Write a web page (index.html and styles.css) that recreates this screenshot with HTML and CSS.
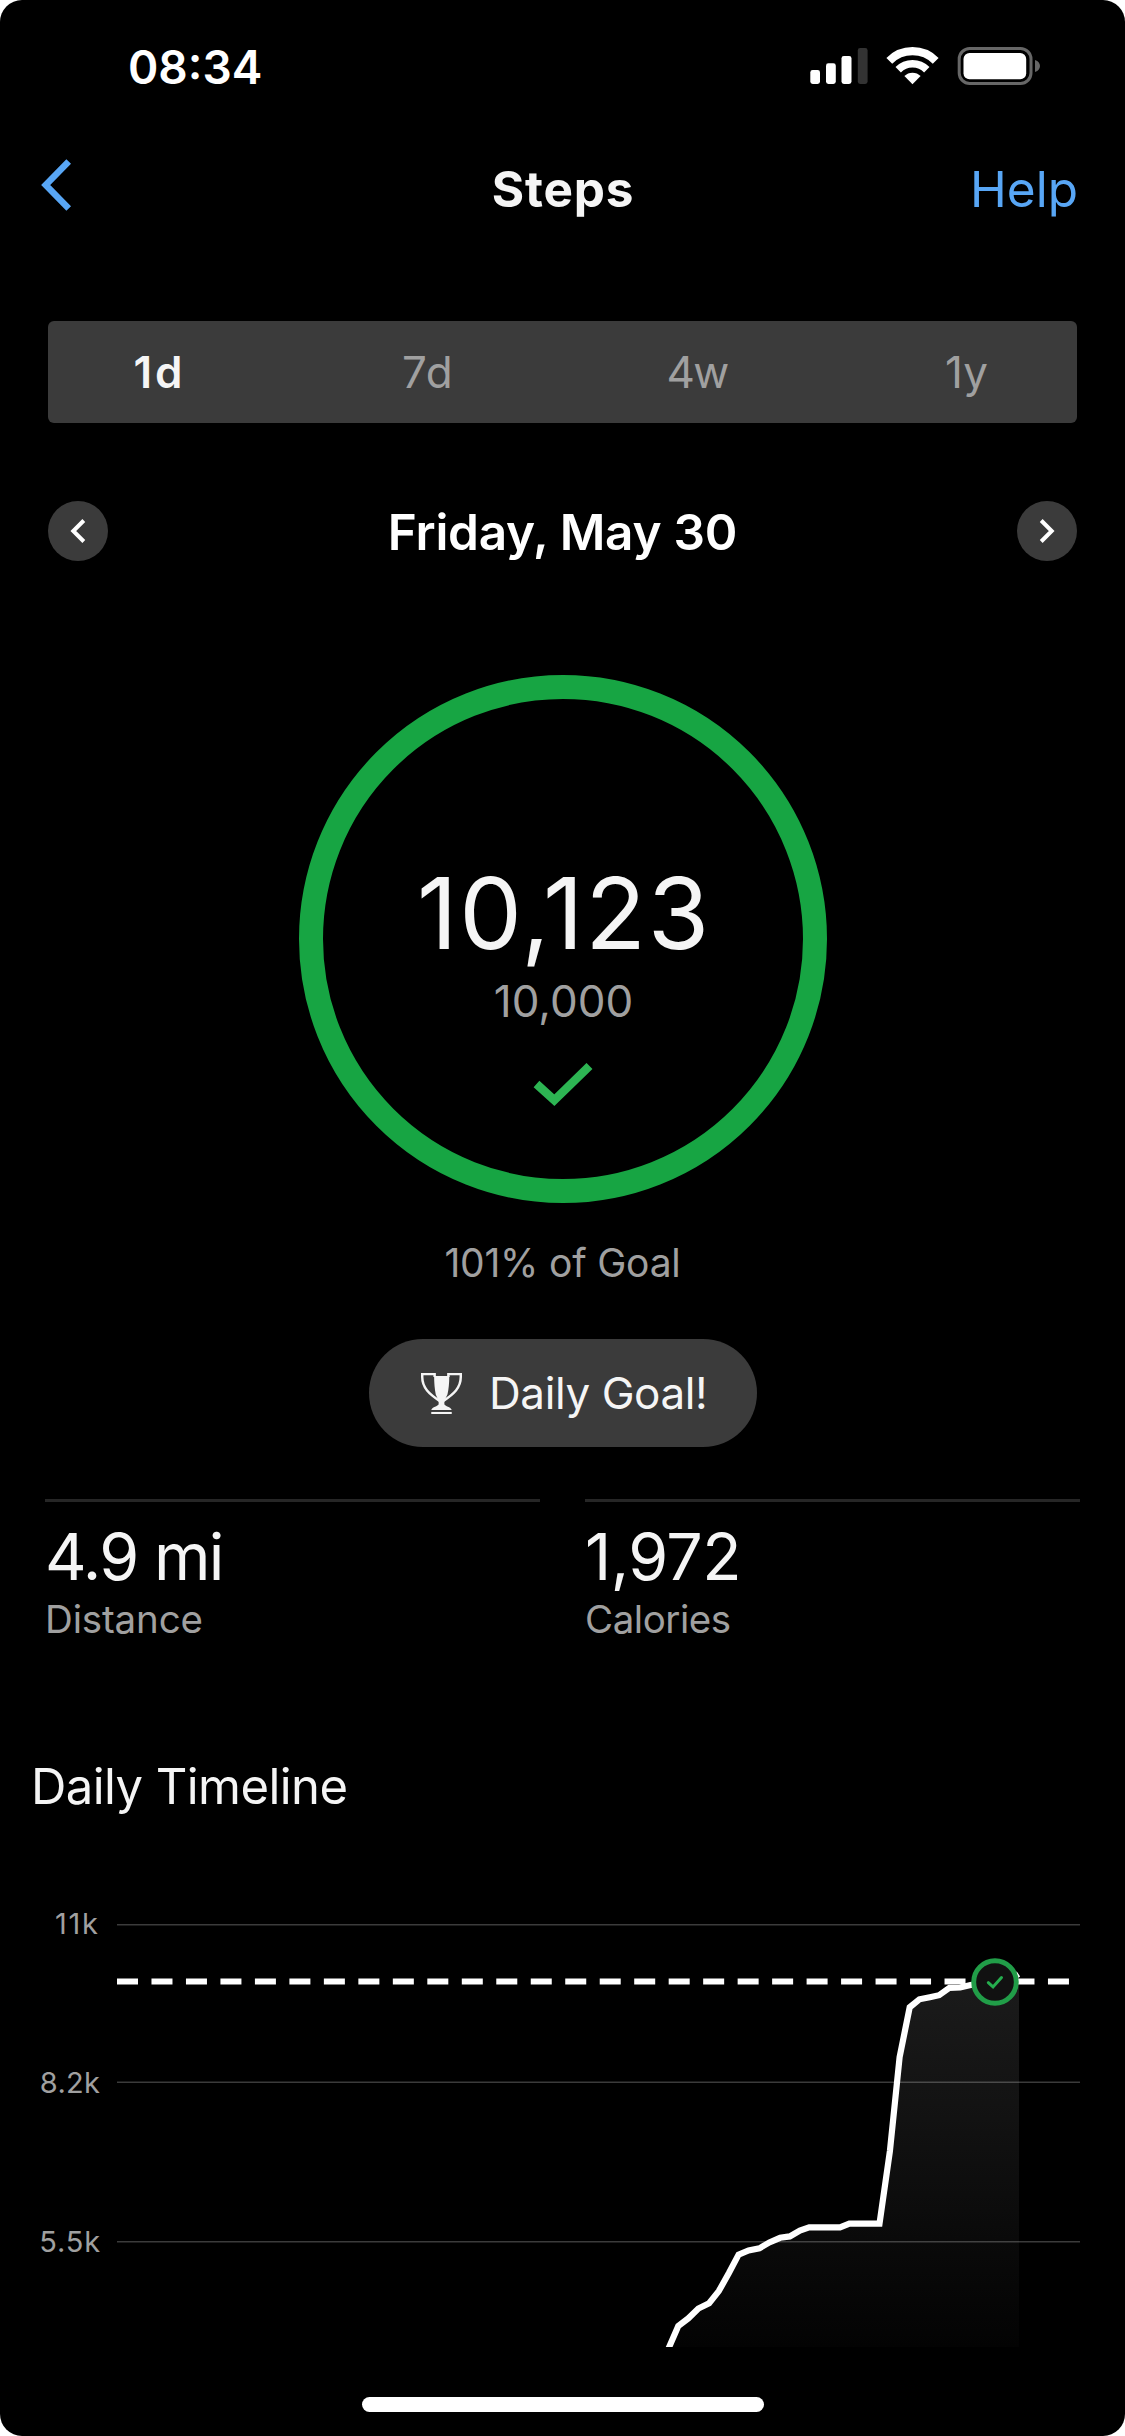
FILE: index.html
```html
<!DOCTYPE html>
<html lang="en">
<head>
<meta charset="utf-8">
<title>Steps</title>
<link rel="stylesheet" href="styles.css">
</head>
<body>
<div class="screen">
  <div class="status">
    <span class="clock">08:34</span>
    <svg class="status-icons" width="230" height="38" viewBox="0 0 230 38">
      <g fill="#fff">
        <rect x="0.3" y="23" width="9.7" height="14" rx="2.4"/>
        <rect x="16" y="16.3" width="9.8" height="20.7" rx="2.4"/>
        <rect x="31.5" y="9" width="10" height="28" rx="2.4"/>
        <rect x="47.8" y="1" width="9.8" height="36" rx="2.4" fill="#333"/>
        <path d="M102.5 37.3L94.4 29A11.5 11.5 0 0 1 110.6 29Z"/>
      </g>
      <g fill="none" stroke="#fff">
        <path stroke-width="8.2" d="M79.3 13.8A32.8 32.8 0 0 1 125.7 13.8"/>
        <path stroke-width="7.6" d="M88.2 22.7A20.2 20.2 0 0 1 116.8 22.7"/>
      </g>
      <rect x="149.2" y="1.5" width="71.8" height="35" rx="10.5" fill="none" stroke="#676767" stroke-width="3"/>
      <rect x="153.5" y="6" width="62.7" height="26.3" rx="6" fill="#fff"/>
      <path d="M225 13C228.5 14 230 16.5 230 19S228.5 24 225 25Z" fill="#676767"/>
    </svg>
  </div>

  <header class="nav">
    <svg class="back" width="32" height="54" viewBox="0 0 32 54"><path d="M28.7 3.500L5.700 27L28.700 50.500" fill="none" stroke="#58a6f5" stroke-width="6.500"/></svg>
    <h1 class="title">Steps</h1>
    <a class="help">Help</a>
  </header>

  <div class="segments">
    <span class="segment segment-active">1d</span>
    <span class="segment segment-7d">7d</span>
    <span class="segment segment-4w">4w</span>
    <span class="segment">1y</span>
  </div>

  <div class="day">
    <span class="day-button"><svg width="60" height="60" viewBox="0 0 60 60"><path d="M35.8 19.5L25.3 30L35.8 40.5" fill="none" stroke="#fff" stroke-width="4"/></svg></span>
    <span class="day-label">Friday, May 30</span>
    <span class="day-button"><svg width="60" height="60" viewBox="0 0 60 60"><path d="M24.2 19.5L34.7 30L24.2 40.5" fill="none" stroke="#fff" stroke-width="4"/></svg></span>
  </div>

  <section class="ring">
    <span class="ring-value">10,123</span>
    <span class="ring-goal">10,000</span>
    <svg class="ring-check" width="60" height="44" viewBox="0 0 60 44"><path d="M3.5 21L21.3 37.2L56.5 3" fill="none" stroke="#2db553" stroke-width="8.5"/></svg>
  </section>
  <p class="percent">101% of Goal</p>

  <div class="badge">
    <svg width="41" height="41" viewBox="0 0 40 40">
      <path d="M12.8 3H27.6C27.6 10 27 16 25.8 21L22.8 27V30.5C23.5 32.5 29 33 30 36.2H10C11 33 16.5 32.5 17.2 30.5V27L14.4 21C13.4 16 12.8 10 12.8 3Z" fill="#f5f5f5"/>
      <path d="M10 38H30V40H10Z" fill="#f5f5f5"/>
      <path d="M13.3 4V1H1.2V4C1.2 14.5 8 20.5 18.5 27.5M26.7 4V1H38.8V4C38.8 14.5 32 20.5 21.5 27.5" fill="none" stroke="#f5f5f5" stroke-width="2.4"/>
    </svg>
    <span>Daily Goal!</span>
  </div>

  <div class="stats">
    <div class="stat">
      <div class="stat-value stat-distance">4.9 mi</div>
      <div class="stat-label">Distance</div>
    </div>
    <div class="stat">
      <div class="stat-value stat-calories">1,972</div>
      <div class="stat-label stat-label-calories">Calories</div>
    </div>
  </div>

  <h2 class="section-title">Daily Timeline</h2>
  <svg class="chart" width="1125" height="447" viewBox="0 1900 1125 447">
    <defs>
      <linearGradient id="area" gradientUnits="userSpaceOnUse" x1="0" y1="1980" x2="0" y2="2347">
        <stop offset="0" stop-color="#1b1b1b"/>
        <stop offset="1" stop-color="#030303"/>
      </linearGradient>
    </defs>
    <path fill="url(#area)" d="M667 2350L678.3 2325.9L688.4 2318.3L698.4 2308.5L709.1 2303.3L718.8 2291.1L728.9 2273L738.6 2254.6L748.6 2250.4L759.4 2248.3L769.4 2242.4L780.1 2237.8L789.8 2236.4L799.9 2230.5L809.2 2227.4H840L849.4 2223.6H879.5L889.9 2151.1L899.6 2057.1L909.7 2007.3L919.4 1999.3L939.1 1995.2L949.5 1987.8L960.2 1987.5L970.6 1985L1019 1976V2350Z"/>
    <path d="M117 1924.7H1080M117 2082.2H1080M117 2241.7H1080" stroke="#fff" stroke-opacity="0.23" stroke-width="1.5"/>
    <path d="M117 1981.5H1070" stroke="#fff" stroke-width="6.2" stroke-dasharray="21 13.48"/>
    <path fill="none" stroke="#fff" stroke-width="6.2" d="M667 2352L678.3 2325.9L688.4 2318.3L698.4 2308.5L709.1 2303.3L718.8 2291.1L728.9 2273L738.6 2254.6L748.6 2250.4L759.4 2248.3L769.4 2242.4L780.1 2237.8L789.8 2236.4L799.9 2230.5L809.2 2227.4H840L849.4 2223.6H879.5L889.9 2151.1L899.6 2057.1L909.7 2007.3L919.4 1999.3L929.8 1997.2L939.1 1995.2L949.5 1987.8L960.2 1987.5L970.6 1985L1000 1981L1010 1979.5L1018.5 1974"/>
    <circle cx="995" cy="1982" r="21.3" fill="#111" stroke="#219d48" stroke-width="4.9"/>
    <path d="M988.3 1982.7L993 1986.9L1001.5 1977.5" fill="none" stroke="#25ad4e" stroke-width="3" stroke-linecap="round"/>
    <g class="axis">
      <text x="55" y="1934" letter-spacing="1.7">11k</text>
      <text x="39.8" y="2093" letter-spacing="0.3">8.2k</text>
      <text x="39.2" y="2252" letter-spacing="0.9">5.5k</text>
    </g>
  </svg>
  <div class="home-bar"></div>
</div>
</body>
</html>
```
FILE: styles.css
```css
* { box-sizing: border-box; margin: 0; padding: 0; }

body {
  background: #fff;
  font-family: Inter, "Liberation Sans", sans-serif;
}

svg { display: block; flex: none; }

.screen {
  width: 1125px;
  height: 2436px;
  display: flex;
  flex-direction: column;
  background: #000;
  color: #f5f5f5;
  border-radius: 22px;
  overflow: hidden;
}

.status {
  height: 132px;
  flex: none;
  display: flex;
  align-items: center;
  justify-content: space-between;
  padding: 0 85px 0 128px;
}

.clock {
  color: #fff;
  font-size: 46px;
  font-weight: 580;
  line-height: 56px;
  padding-top: 1px;
}

.nav {
  height: 106px;
  flex: none;
  display: grid;
  grid-template-columns: 1fr auto 1fr;
  align-items: center;
  padding: 0 47px 0 40px;
  margin-top: 4px;
}

.back { margin-bottom: 8px; }

.title {
  font-size: 49.5px;
  font-weight: 650;
  line-height: 60px;
  letter-spacing: 0.8px;
  padding-left: 8px;
}

.help {
  color: #58a6f5;
  font-size: 49.5px;
  line-height: 60px;
  text-align: right;
}

.segments {
  height: 102px;
  flex: none;
  display: grid;
  grid-template-columns: repeat(4, 221px);
  justify-content: space-between;
  align-items: center;
  margin: 79px 48px 0;
  border-radius: 6px;
  background: #3b3b3b;
}

.segment {
  color: #a0a0a0;
  font-size: 44px;
  line-height: 54px;
  text-align: center;
}

.segment-active {
  color: #f5f5f5;
  font-weight: 600;
  letter-spacing: 3px;
  padding-left: 2px;
}

.segment-7d { letter-spacing: 1px; }
.segment-4w { letter-spacing: -1.5px; }

.day {
  flex: none;
  display: flex;
  align-items: center;
  justify-content: space-between;
  margin: 78px 48px 0;
}

.day-button {
  border-radius: 50%;
  background: #3b3b3b;
}

.day-label {
  color: #fff;
  font-size: 49.5px;
  font-weight: 560;
  line-height: 58px;
  letter-spacing: -0.25px;
  padding-top: 2px;
}

.ring {
  width: 528px;
  height: 528px;
  flex: none;
  display: flex;
  flex-direction: column;
  align-items: center;
  align-self: center;
  margin-top: 114px;
  padding-top: 164px;
  border: 24px solid #17a543;
  border-radius: 50%;
}

.ring-value {
  font-size: 99.5px;
  line-height: 100px;
  letter-spacing: 1.8px;
  padding-left: 3px;
}

.ring-goal {
  color: #a0a0a0;
  font-size: 44px;
  line-height: 50px;
  margin-top: 13px;
  padding-left: 2px;
}

.ring-check { margin-top: 37px; }

.percent {
  color: #a0a0a0;
  font-size: 39px;
  line-height: 48px;
  letter-spacing: -0.2px;
  text-align: center;
  margin-top: 36px;
}

.badge {
  width: 388px;
  height: 108px;
  flex: none;
  display: flex;
  align-items: center;
  align-self: center;
  gap: 27.5px;
  margin-top: 52px;
  padding-left: 52px;
  border-radius: 54px;
  background: #3b3b3b;
  font-size: 44px;
  line-height: 54px;
  letter-spacing: -0.4px;
}

.stats {
  flex: none;
  display: grid;
  grid-template-columns: 1fr 1fr;
  gap: 45px;
  padding: 0 45px;
  margin-top: 52px;
}

.stat {
  border-top: 3px solid #262626;
  padding-top: 20px;
}

.stat-value {
  font-size: 64.5px;
  line-height: 70px;
}

.stat-distance { letter-spacing: -1.7px; }
.stat-calories { letter-spacing: -0.6px; }

.stat-label {
  color: #a0a0a0;
  font-size: 38.5px;
  line-height: 46px;
  letter-spacing: -0.15px;
  margin-top: 4px;
}

.stat-label-calories { letter-spacing: -0.45px; }

.section-title {
  font-size: 49px;
  font-weight: 400;
  line-height: 60px;
  letter-spacing: -0.57px;
  margin: 115px 0 0 31px;
}

.chart {
  margin-top: 83px;
  overflow: hidden;
}

.axis {
  fill: #a0a0a0;
  font-size: 29px;
}

.home-bar {
  width: 402px;
  height: 15px;
  flex: none;
  align-self: center;
  margin-top: 50px;
  border-radius: 7.5px;
  background: #fff;
}
```
